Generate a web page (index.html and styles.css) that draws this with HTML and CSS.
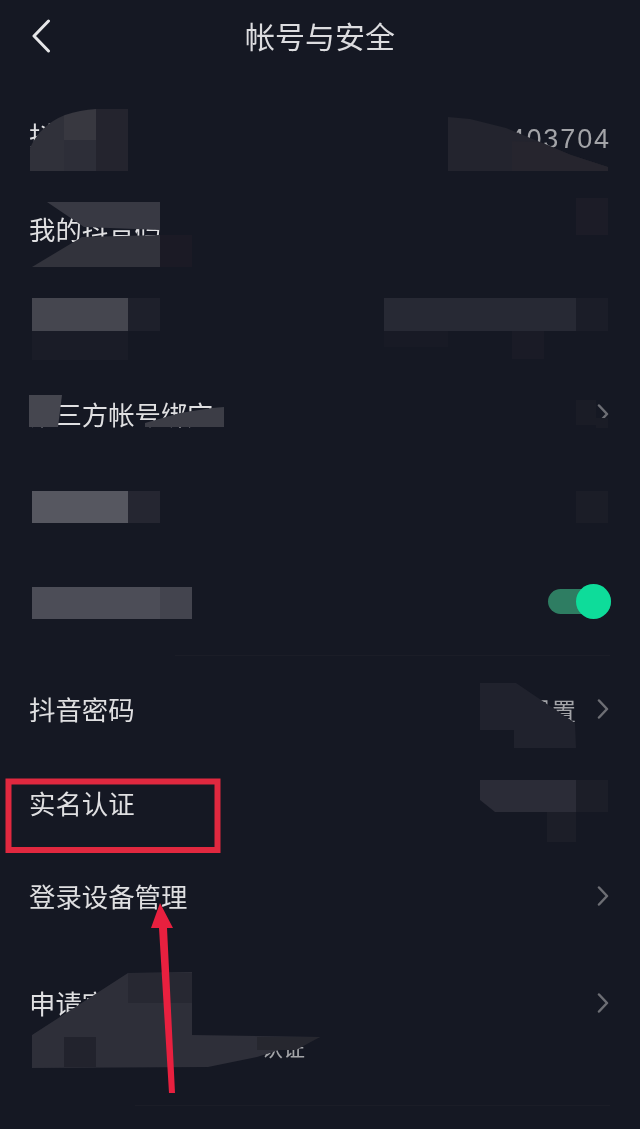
FILE: index.html
```html
<!DOCTYPE html>
<html lang="zh-CN">
<head>
<meta charset="utf-8">
<title>帐号与安全</title>
<link rel="stylesheet" href="styles.css">
</head>
<body>
<div class="screen">
  <header class="header">
    <svg class="back" viewBox="0 0 20 34" width="20" height="34"><path d="M17.5 2 L3 17 L17.5 32" /></svg>
    <h1 class="title">帐号与安全</h1>
  </header>
  <main class="list">
    <div class="row g39"><span class="label">抖音号</span><span class="value digits">403704</span></div>
    <div class="row g48"><span class="label">我的抖音码</span></div>
    <div class="row g39"></div>
    <div class="row g54"><span class="label">第三方帐号绑定</span><svg class="chev" viewBox="0 0 12 20" width="12" height="20"><path d="M2 1.5 L10 10 L2 18.500" /></svg></div>
    <div class="row g46"></div>
    <div class="row g48">
      <span class="toggle"><span class="knob"></span></span>
    </div>
    <div class="sep s-a"></div>
    <div class="row g31"><span class="label">抖音密码</span><span class="value">未设置</span><svg class="chev" viewBox="0 0 12 20" width="12" height="20"><path d="M2 1.5 L10 10 L2 18.500" /></svg></div>
    <div class="row g48"><span class="label">实名认证</span></div>
    <div class="row g47"><span class="label">登录设备管理</span><svg class="chev" viewBox="0 0 12 20" width="12" height="20"><path d="M2 1.5 L10 10 L2 18.500" /></svg></div>
    <div class="row g61"><span class="label">申请官方认证</span><svg class="chev" viewBox="0 0 12 20" width="12" height="20"><path d="M2 1.5 L10 10 L2 18.500" /></svg></div>
    <p class="sub">认证</p>
    <div class="sep s-b"></div>
  </main>
  <svg class="overlay" viewBox="0 0 640 1129" width="640" height="1129" aria-hidden="true">
    <g class="mosaic">
      <!-- row 1 -->
      <clipPath id="c1"><path d="M30 171 V148 Q40 125 65 115 Q80 110 96 109 H128 V171 Z"/></clipPath>
      <g clip-path="url(#c1)">
        <rect x="30" y="109" width="34" height="62" fill="#30313a"/>
        <rect x="64" y="109" width="32" height="31" fill="#383840"/>
        <rect x="64" y="140" width="32" height="31" fill="#2d2e38"/>
        <rect x="96" y="109" width="32" height="62" fill="#24242e"/>
      </g>
      <polygon points="448,117 470,119 506,128 540,142 571,155 608,167 608,171 448,171" fill="#23242e"/>
      <polygon points="512,141 540,142 571,155 608,167 608,171 512,171" fill="#26252e"/>
      <!-- row 2 -->
      <polygon points="47,202 160,202 160,230 84,227" fill="#383943"/>
      <polygon points="32,267 82,237 160,235 160,267" fill="#32333c"/>
      <rect x="160" y="235" width="32" height="32" fill="#1b1a25"/>
      <rect x="576" y="198" width="32" height="37" fill="#1c1c27"/>
      <!-- row 3 -->
      <rect x="32" y="298" width="96" height="33" fill="#45464f"/>
      <rect x="128" y="298" width="32" height="33" fill="#1e202b"/>
      <rect x="32" y="331" width="96" height="29" fill="#1a1c27"/>
      <rect x="384" y="298" width="192" height="33" fill="#272934"/>
      <rect x="576" y="298" width="32" height="33" fill="#1b1d28"/>
      <rect x="384" y="331" width="64" height="16" fill="#181a25"/>
      <rect x="512" y="331" width="32" height="28" fill="#1a1b26"/>
      <!-- row 4 -->
      <polygon points="29,395 62,395 58,427 29,427" fill="#45464f"/>
      <polygon points="145,423 180,413 212,408 224,407 224,427 145,427" fill="#3c3d46"/>
      <rect x="576" y="400" width="20" height="25" fill="#1a1c26"/>
      <rect x="596" y="418" width="12" height="10" fill="#1a1c26"/>
      <!-- row 5 -->
      <rect x="32" y="491" width="96" height="32" fill="#565760"/>
      <rect x="128" y="491" width="32" height="32" fill="#252631"/>
      <rect x="576" y="491" width="32" height="32" fill="#1b1d27"/>
      <!-- row 6 -->
      <rect x="32" y="587" width="128" height="32" fill="#4c4d57"/>
      <rect x="160" y="587" width="32" height="32" fill="#43444e"/>
      <!-- row 7 -->
      <polygon points="480,683 516,683 575,723 576,748 514,748 514,730 480,730" fill="#20222d"/>
      <!-- row 8 -->
      <polygon points="480,780 576,780 576,812 495,812 480,800" fill="#2b2c37"/>
      <rect x="576" y="780" width="32" height="32" fill="#1c1e28"/>
      <rect x="547" y="812" width="29" height="30" fill="#1c1e28"/>
      <!-- row 10 -->
      <polygon points="32,1035 128,973 192,972 192,1035 320,1037 257,1057 208,1067 32,1068" fill="#2e2f39"/>
      <polygon points="257,1037 320,1037 296,1050 257,1050" fill="#26272f"/>
      <rect x="64" y="1037" width="32" height="30" fill="#22232d"/>
      <rect x="128" y="973" width="64" height="30" fill="#272832"/>
    </g>
    <rect class="redbox" x="8.500" y="781.500" width="209" height="68.500"/>
    <polygon class="arrow" points="160,903 173,928 167,928 175,1093 169,1093 159,928 151,928"/>
  </svg>
</div>
</body>
</html>
```
FILE: styles.css
```css
* { box-sizing: border-box; }
html, body { margin: 0; padding: 0; }
body {
  background: #151823;
  font-family: "Noto Sans CJK SC", "Noto Sans", sans-serif;
}
.screen {
  position: relative;
  width: 640px;
  height: 1129px;
  overflow: hidden;
  background: #151823;
  filter: blur(0.35px);
}
.header {
  position: relative;
  height: 74px;
  display: flex;
  align-items: center;
  justify-content: center;
}
.back {
  position: absolute;
  left: 31px;
  top: 19px;
  fill: none;
  stroke: #e6e6e8;
  stroke-width: 3;
  stroke-linecap: round;
  stroke-linejoin: round;
}
.title {
  margin: 0;
  padding-bottom: 4px;
  font-size: 30px;
  font-weight: 400;
  line-height: 40px;
  color: #dcdcdf;
}
.list { display: flex; flex-direction: column; }
.row {
  display: flex;
  align-items: center;
  height: 46px;
  padding: 0 32px 0 29px;
}
.g31 { margin-top: 31px; }
.g39 { margin-top: 39px; }
.g46 { margin-top: 46px; }
.g47 { margin-top: 47px; }
.g48 { margin-top: 48px; }
.g54 { margin-top: 54px; }
.g61 { margin-top: 61px; }
.label {
  padding-bottom: 3px;
  font-size: 26.400px;
  line-height: 36px;
  color: #dfdfe1;
  margin-right: auto;
}
.value {
  font-size: 24px;
  line-height: 36px;
  color: #a3a4a8;
  margin-right: 21px;
}
.digits {
  padding-top: 5px;
  font-family: "Liberation Sans", sans-serif;
  font-size: 27px;
  letter-spacing: 1.900px;
  margin-right: -3px;
}
.chev {
  flex: none;
  margin: 0 -1px 3px 0;
  fill: none;
  stroke: #6d6e74;
  stroke-width: 2.5;
  stroke-linecap: round;
  stroke-linejoin: round;
}
.toggle {
  position: relative;
  margin-left: auto;
  margin-right: -3px;
  width: 63px;
  height: 25px;
  border-radius: 13px;
  background: #2e7d62;
}
.knob {
  position: absolute;
  right: 0;
  top: -5px;
  width: 35px;
  height: 35px;
  border-radius: 50%;
  background: #0edc9a;
}
.sub {
  margin: 4px 0 0;
  padding-left: 261px;
  font-size: 22px;
  line-height: 30px;
  color: #a3a4a8;
}
.sep { height: 1px; background: #1b1d27; margin-right: 30px; }
.s-a { margin-top: 31px; margin-left: 175px; }
.s-b { margin-top: 44px; margin-left: 135px; }
.overlay { position: absolute; left: 0; top: 0; }
.redbox { fill: none; stroke: #e0283f; stroke-width: 6; }
.arrow { fill: #e8203f; }
```
